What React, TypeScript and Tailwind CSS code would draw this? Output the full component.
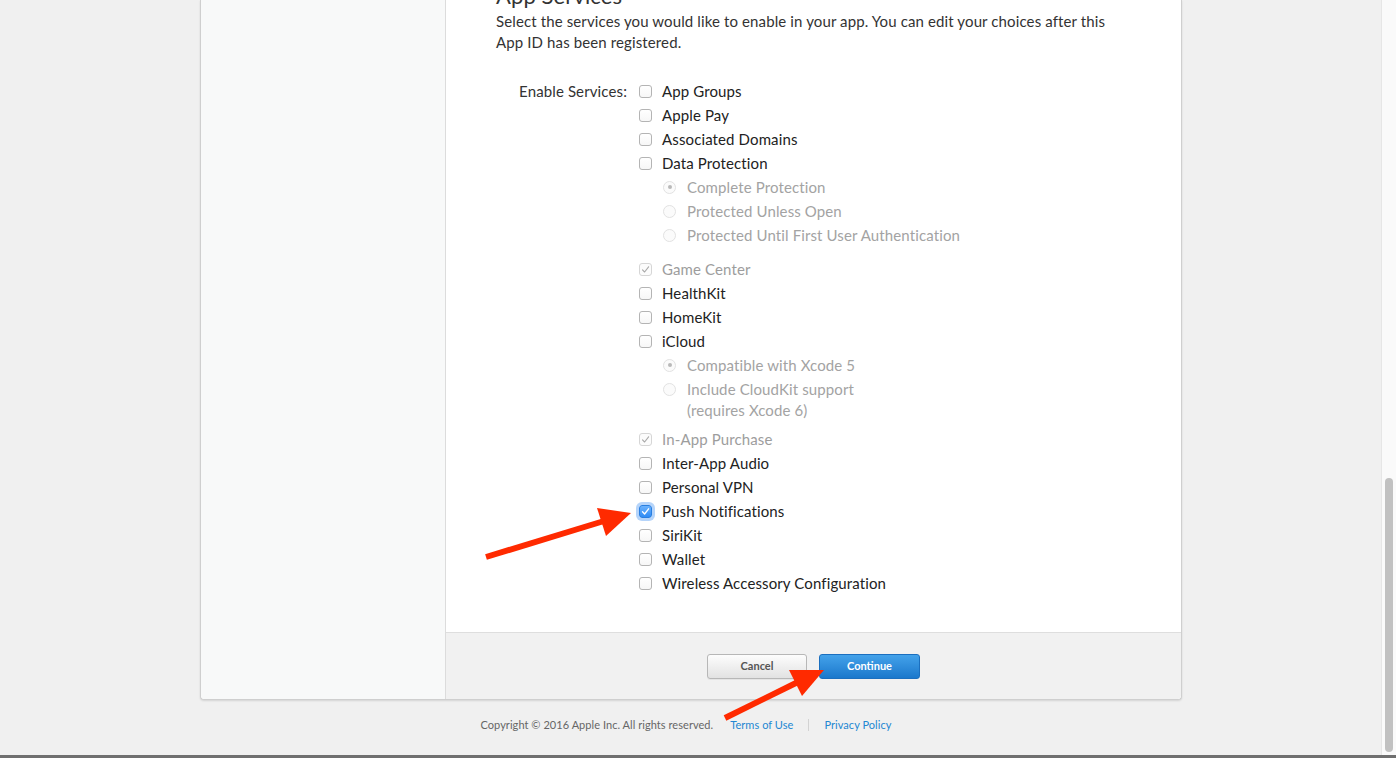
import React from "react";

type Radio = { label: string[]; selected?: boolean };
type Item = {
  label: string;
  state?: "off" | "on" | "disabledOn";
  radios?: Radio[];
  groupClass?: string;
};

const items: Item[] = [
  { label: "App Groups" },
  { label: "Apple Pay" },
  { label: "Associated Domains" },
  {
    label: "Data Protection",
    radios: [
      { label: ["Complete Protection"], selected: true },
      { label: ["Protected Unless Open"] },
      { label: ["Protected Until First User Authentication"] },
    ],
    groupClass: "mb-[10px]",
  },
  { label: "Game Center", state: "disabledOn" },
  { label: "HealthKit" },
  { label: "HomeKit" },
  {
    label: "iCloud",
    radios: [
      { label: ["Compatible with Xcode 5"], selected: true },
      { label: ["Include CloudKit support", "(requires Xcode 6)"] },
    ],
    groupClass: "mb-[5px]",
  },
  { label: "In-App Purchase", state: "disabledOn" },
  { label: "Inter-App Audio" },
  { label: "Personal VPN" },
  { label: "Push Notifications", state: "on" },
  { label: "SiriKit" },
  { label: "Wallet" },
  { label: "Wireless Accessory Configuration" },
];

function Check({ state = "off" }: { state?: Item["state"] }) {
  if (state === "on") {
    return (
      <span className="flex h-[13px] w-[13px] shrink-0 items-center justify-center rounded-[3px] border border-[#2a7fe0] bg-gradient-to-b from-[#69b1fd] to-[#2f8cf5] shadow-[0_0_0_3px_rgba(90,160,245,0.45)]">
        <svg width="9" height="9" viewBox="0 0 9 9">
          <path d="M1.5 4.8 L3.6 7 L7.6 1.8" fill="none" stroke="#fff" strokeWidth="1.3" strokeLinecap="round" strokeLinejoin="round" />
        </svg>
      </span>
    );
  }
  if (state === "disabledOn") {
    return (
      <span className="flex h-[13px] w-[13px] shrink-0 items-center justify-center rounded-[3px] border border-[#d6d6d6] bg-[#fcfcfc]">
        <svg width="9" height="9" viewBox="0 0 9 9">
          <path d="M1.5 4.8 L3.6 7 L7.6 1.8" fill="none" stroke="#a9a9a9" strokeWidth="1.1" strokeLinecap="round" strokeLinejoin="round" />
        </svg>
      </span>
    );
  }
  return <span className="h-[13px] w-[13px] shrink-0 rounded-[3px] border border-[#b4b4b4] bg-gradient-to-b from-white to-[#f7f7f7]" />;
}

function RadioDot({ selected }: { selected?: boolean }) {
  return (
    <span className="flex h-[13px] w-[13px] shrink-0 items-center justify-center rounded-full border border-[#e2e2e2] bg-[#fbfbfb]">
      {selected && <span className="h-[4px] w-[4px] rounded-full bg-[#b9b9b9]" />}
    </span>
  );
}

export default function App() {
  return (
    <div
      className="relative flex h-[758px] w-[1396px] flex-col overflow-hidden bg-[#f0f0f0]"
      style={{ fontFamily: "Lato, 'Open Sans', sans-serif" }}
    >
      <div className="flex min-h-0 flex-1">
        {/* page */}
        <div className="flex min-w-0 flex-1 flex-col">
          {/* card */}
          <div className="ml-[200px] flex w-[982px] rounded-b-[4px] border-x border-b border-[#cfcfcf] bg-white shadow-[0_1px_2px_rgba(0,0,0,0.12)]">
            <aside className="w-[245px] shrink-0 rounded-bl-[4px] border-r border-[#dcdcdc] bg-[#f8f9f9]" />
            <main className="flex min-w-0 flex-1 flex-col">
              <div className="pb-[37px] pl-[50px] pr-[60px] tracking-[0.12px]">
                <h2 className="-mt-[17px] text-[22px] leading-[26px] text-[#333]">App Services</h2>
                <p className="mt-[2px] text-[15px] leading-[21px] text-[#333]">
                  Select the services you would like to enable in your app. You can edit your choices after this App ID has been registered.
                </p>
                <div className="mt-[26px] flex text-[15px] leading-[21px]">
                  <div className="-ml-[50px] w-[181px] shrink-0 pt-[1.5px] text-right text-[#333]">Enable Services:</div>
                  <div className="ml-[12px] flex flex-col">
                    {items.map((it) => {
                      const disabled = it.state === "disabledOn";
                      return (
                        <div key={it.label} className={it.groupClass}>
                          <label className="flex h-[24px] items-center gap-[10px]">
                            <Check state={it.state} />
                            <span className={disabled ? "text-[#9d9d9d]" : "text-[#222]"}>{it.label}</span>
                          </label>
                          {it.radios?.map((r) => (
                            <div key={r.label[0]} className="ml-[24px] flex items-start gap-[11px] py-[1.5px]">
                              <span className="flex h-[21px] items-center">
                                <RadioDot selected={r.selected} />
                              </span>
                              <span className="text-[#a3a3a3]">
                                {r.label.map((l) => (
                                  <span key={l} className="block">
                                    {l}
                                  </span>
                                ))}
                              </span>
                            </div>
                          ))}
                        </div>
                      );
                    })}
                  </div>
                </div>
              </div>
              <div className="flex h-[67px] items-center justify-center gap-[12px] rounded-br-[4px] border-t border-[#dedede] bg-[#f1f1f1]">
                <button className="h-[25px] w-[100px] rounded-[3px] border border-[#b7b7b7] bg-gradient-to-b from-[#fdfdfd] to-[#e2e2e2] text-[11px] font-bold text-[#555] shadow-[0_1px_0_rgba(0,0,0,0.05)]">
                  Cancel
                </button>
                <button className="h-[25px] w-[101px] rounded-[3px] border border-[#1b6fbf] bg-gradient-to-b from-[#43a2ea] to-[#1a78cc] text-[11px] font-bold text-white">
                  Continue
                </button>
              </div>
            </main>
          </div>
          {/* footer */}
          <div className="mt-[18px] flex items-center justify-center pr-[9px] text-[11px] leading-[14px] tracking-[0.05px]">
            <span className="text-[#666]">Copyright © 2016 Apple Inc. All rights reserved.</span>
            <a className="ml-[17px] text-[#2387d2]">Terms of Use</a>
            <span className="mx-[15px] h-[12px] w-px bg-[#d3d3d3]" />
            <a className="text-[#2387d2]">Privacy Policy</a>
          </div>
        </div>
        {/* scrollbar */}
        <div className="relative w-[15px] shrink-0 border-l border-[#e6e6e6] bg-[#fafafa]">
          <div className="absolute left-[3px] top-[478px] h-[274px] w-[8px] rounded-full bg-[#c1c1c1]" />
        </div>
      </div>
      <div className="h-[3px] shrink-0 bg-[#6f6f6f]" />

      {/* annotation arrows */}
      <svg className="pointer-events-none absolute inset-0" width="1396" height="758" viewBox="0 0 1396 758">
        <line x1="486" y1="557" x2="604" y2="521" stroke="#ff2a00" strokeWidth="6" />
        <polygon points="631,513 597,508 606,536" fill="#ff2a00" />
        <line x1="725" y1="718" x2="800" y2="681" stroke="#ff2a00" strokeWidth="6" />
        <polygon points="824,670 789,670 802,696" fill="#ff2a00" />
      </svg>
    </div>
  );
}
